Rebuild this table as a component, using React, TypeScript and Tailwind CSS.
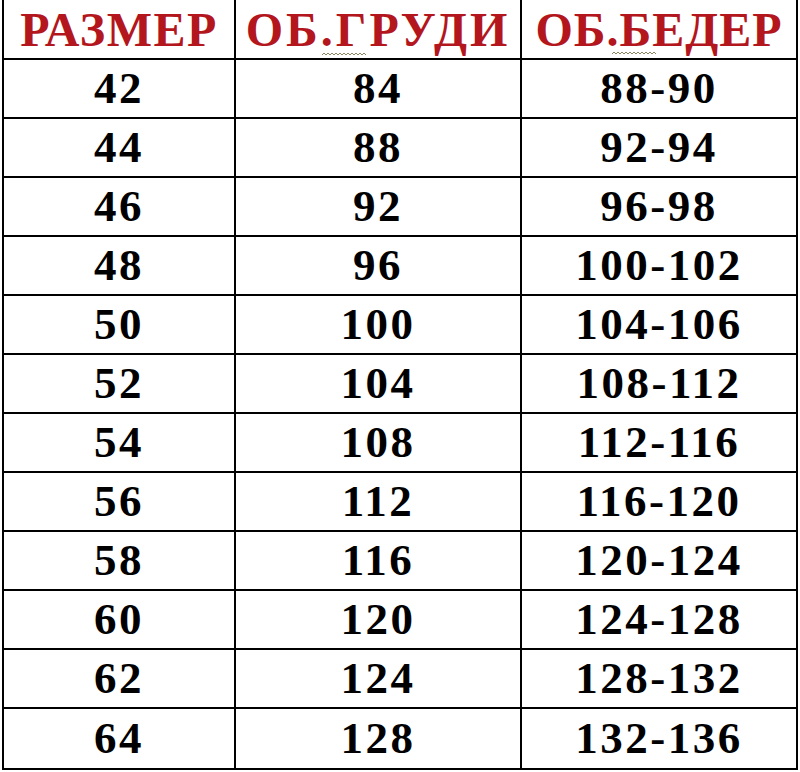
const rows: [string, string, string][] = [
  ['42', '84', '88-90'],
  ['44', '88', '92-94'],
  ['46', '92', '96-98'],
  ['48', '96', '100-102'],
  ['50', '100', '104-106'],
  ['52', '104', '108-112'],
  ['54', '108', '112-116'],
  ['56', '112', '116-120'],
  ['58', '116', '120-124'],
  ['60', '120', '124-128'],
  ['62', '124', '128-132'],
  ['64', '128', '132-136'],
];

const cols = ['w-[232px]', 'w-[286px]', 'flex-1'];

function Squiggle({ className }: { className: string }) {
  return (
    <svg className={`absolute ${className}`} width="44" height="4" viewBox="0 0 44 4">
      <path
        d="M0 3 L2 1 L4 3 L6 1 L8 3 L10 1 L12 3 L14 1 L16 3 L18 1 L20 3 L22 1 L24 3 L26 1 L28 3 L30 1 L32 3 L34 1 L36 3 L38 1 L40 3 L42 1 L44 3"
        fill="none"
        stroke="#8a8660"
        strokeWidth="1"
      />
    </svg>
  );
}

export default function App() {
  return (
    <div className="h-[772px] w-[800px] bg-white pl-[2px] font-['Liberation_Serif','Times_New_Roman',serif] font-bold">
      <div className="flex w-[796px] flex-col border-x-2 border-b-2 border-black">
        {/* Header */}
        <div className="relative flex h-[60px] border-b-2 border-black text-[48px] leading-none text-[#b3161d]">
          <div className={`${cols[0]} flex items-center justify-center border-r-2 border-black pt-[2px] tracking-[1.5px]`}>РАЗМЕР</div>
          <div className={`${cols[1]} relative flex items-center justify-center border-r-2 border-black pt-[2px] tracking-[3px]`}>
            ОБ.ГРУДИ
            <Squiggle className="left-[86px] top-[52px]" />
          </div>
          <div className={`${cols[2]} relative flex items-center justify-center pt-[2px] tracking-[1px]`}>
            ОБ.БЕДЕР
            <Squiggle className="left-[90px] top-[51px]" />
          </div>
        </div>

        {/* Rows */}
        {rows.map((row, i) => (
          <div
            key={row[0]}
            className={`flex h-[59px] text-[45px] leading-none tracking-[2.5px] text-black ${i < rows.length - 1 ? 'border-b-2 border-black' : ''}`}
          >
            {row.map((cell, j) => (
              <div
                key={j}
                className={`${cols[j]} flex items-center justify-center ${j < 2 ? 'border-r-2 border-black' : ''}`}
              >
                {cell}
              </div>
            ))}
          </div>
        ))}
      </div>
    </div>
  );
}
